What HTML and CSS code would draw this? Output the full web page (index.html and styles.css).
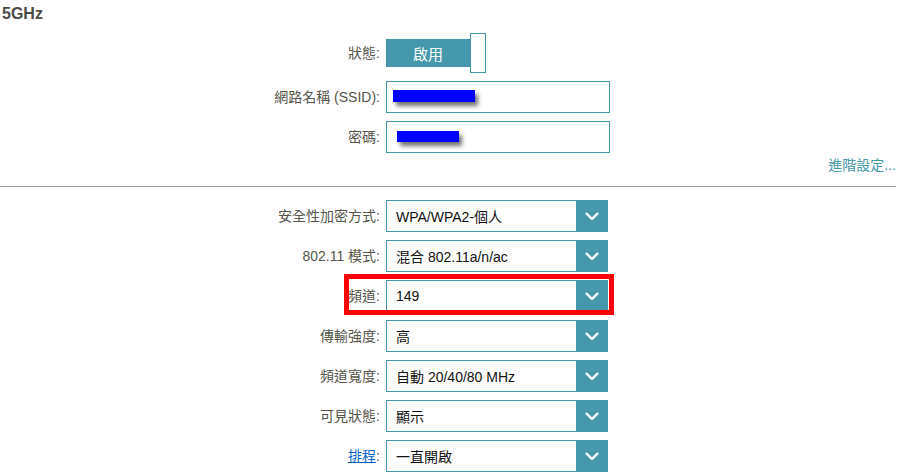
FILE: index.html
```html
<!DOCTYPE html>
<html lang="zh-Hant">
<head>
<meta charset="utf-8">
<link rel="stylesheet" href="styles.css">
</head>
<body>
<div class="page">
  <h2 class="band">5GHz</h2>
  <div class="form">
    <div class="row row-toggle">
      <label class="lbl">狀態:</label>
      <div class="toggle"><span class="toggle-on">啟用</span><span class="toggle-knob"></span></div>
    </div>
    <div class="row">
      <label class="lbl">網路名稱 (SSID):</label>
      <div class="textbox"><span class="mask mask-ssid"></span></div>
    </div>
    <div class="row">
      <label class="lbl">密碼:</label>
      <div class="textbox"><span class="mask mask-pw"></span></div>
    </div>
  </div>
  <div class="adv"><a class="adv-link">進階設定...</a></div>
  <hr class="sep">
  <div class="form form-selects">
    <div class="row">
      <label class="lbl">安全性加密方式:</label>
      <div class="select"><span class="val">WPA/WPA2-個人</span><span class="arrow"><svg width="14" height="8" viewBox="0 0 14 8"><path d="M1 1 L7 7 L13 1" fill="none" stroke="#fff" stroke-width="2.4"/></svg></span></div>
    </div>
    <div class="row">
      <label class="lbl">802.11 模式:</label>
      <div class="select"><span class="val">混合 802.11a/n/ac</span><span class="arrow"><svg width="14" height="8" viewBox="0 0 14 8"><path d="M1 1 L7 7 L13 1" fill="none" stroke="#fff" stroke-width="2.4"/></svg></span></div>
    </div>
    <div class="row row-mark">
      <label class="lbl">頻道:</label>
      <div class="select"><span class="val">149</span><span class="arrow"><svg width="14" height="8" viewBox="0 0 14 8"><path d="M1 1 L7 7 L13 1" fill="none" stroke="#fff" stroke-width="2.4"/></svg></span><span class="redbox"></span></div>
    </div>
    <div class="row">
      <label class="lbl">傳輸強度:</label>
      <div class="select"><span class="val">高</span><span class="arrow"><svg width="14" height="8" viewBox="0 0 14 8"><path d="M1 1 L7 7 L13 1" fill="none" stroke="#fff" stroke-width="2.4"/></svg></span></div>
    </div>
    <div class="row">
      <label class="lbl">頻道寬度:</label>
      <div class="select"><span class="val">自動 20/40/80 MHz</span><span class="arrow"><svg width="14" height="8" viewBox="0 0 14 8"><path d="M1 1 L7 7 L13 1" fill="none" stroke="#fff" stroke-width="2.4"/></svg></span></div>
    </div>
    <div class="row">
      <label class="lbl">可見狀態:</label>
      <div class="select"><span class="val">顯示</span><span class="arrow"><svg width="14" height="8" viewBox="0 0 14 8"><path d="M1 1 L7 7 L13 1" fill="none" stroke="#fff" stroke-width="2.4"/></svg></span></div>
    </div>
    <div class="row">
      <label class="lbl"><a class="sched">排程</a>:</label>
      <div class="select"><span class="val">一直開啟</span><span class="arrow"><svg width="14" height="8" viewBox="0 0 14 8"><path d="M1 1 L7 7 L13 1" fill="none" stroke="#fff" stroke-width="2.4"/></svg></span></div>
    </div>
  </div>
</div>
</body>
</html>
```
FILE: styles.css
```css
* { box-sizing: border-box; }
html, body { margin: 0; padding: 0; background: #fff; }
body {
  font-family: "Liberation Sans", Arial, "Noto Sans CJK TC", sans-serif;
  font-size: 14px;
  color: #4f4f45;
  width: 899px;
  height: 476px;
  overflow: hidden;
}
.page { padding-top: 5px; }
.band {
  margin: 0 0 0 2px;
  font-size: 16px;
  font-weight: bold;
  color: #4a4a40;
  line-height: 18px;
}
.form {
  display: flex;
  flex-direction: column;
  gap: 8px;
  margin-top: 10px;
}
.row {
  display: grid;
  grid-template-columns: 380px auto;
  column-gap: 6px;
  align-items: center;
}
.lbl {
  text-align: right;
  color: #55554a;
  line-height: 16px;
}
.toggle {
  display: flex;
  align-items: center;
  height: 40px;
}
.toggle-on {
  width: 84px;
  height: 28px;
  background: #4598ab;
  color: #fff;
  font-size: 15px;
  display: flex;
  align-items: center;
  justify-content: center;
}
.toggle-knob {
  width: 16px;
  height: 40px;
  border: 1px solid #4598ab;
  background: #fff;
}
.textbox {
  width: 224px;
  height: 32px;
  border: 1px solid #4598ab;
  position: relative;
}
.mask {
  position: absolute;
  background: #0000ff;
  box-shadow: 3px 4px 4px rgba(0,0,0,0.55);
  filter: blur(0.7px);
}
.mask-ssid { left: 6px; top: 8px; width: 82px; height: 12px; }
.mask-pw { left: 10px; top: 9px; width: 62px; height: 11px; }
.adv {
  display: flex;
  justify-content: flex-end;
  padding-right: 3px;
  margin-top: 4px;
  line-height: 16px;
}
.adv-link { color: #4598ab; }
.sep {
  margin: 13px 3px 0 0;
  border: 0;
  border-top: 1px solid #a0a0a0;
  height: 0;
}
.form-selects { margin-top: 13px; }
.select {
  width: 222px;
  height: 32px;
  border: 1px solid #4598ab;
  display: flex;
  align-items: center;
  position: relative;
  color: #111;
}
.val {
  flex: 1;
  padding-left: 9px;
}
.arrow {
  width: 32px;
  height: 32px;
  margin: -1px -1px -1px 0;
  background: #4598ab;
  display: flex;
  align-items: center;
  justify-content: center;
}
.redbox {
  position: absolute;
  left: -43px;
  top: -7px;
  width: 270px;
  height: 41px;
  border: 5px solid #ff0000;
  pointer-events: none;
}
.sched { color: #0b5fc4; text-decoration: underline; }
```
